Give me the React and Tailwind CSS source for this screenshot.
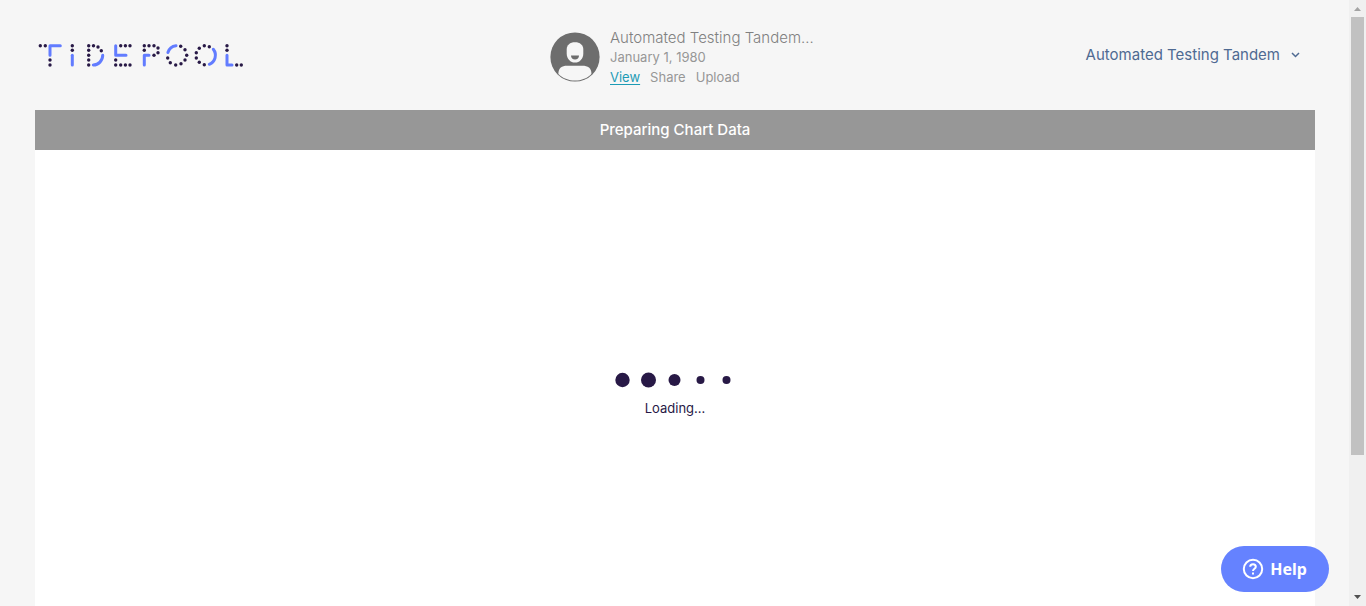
import React from "react";

const logoDots = [
  [40.3, 45.7], [45.3, 45.7], [50, 60], [50, 65],
  [72.3, 45.7], [72.3, 50.3],
  [88.7, 45.7], [88.7, 50.3], [88.7, 55.2], [88.7, 60], [88.7, 65], [93.5, 45.7], [98, 47], [101.3, 50.7],
  [120.7, 45.7], [125.4, 45.7], [130, 45.7], [115.7, 60], [115.7, 65], [120.7, 65], [125.4, 65], [130, 65],
  [144.3, 45.7], [149, 45.7], [154, 45.7], [144.3, 50.3], [158, 48], [158, 52.7], [154, 55.3],
  [180.7, 46.3], [185, 49.7], [186.7, 55.3], [185, 60], [181, 63.7], [175.7, 65], [170.3, 62.7], [167.7, 58],
  [204.3, 45.7], [209.3, 46.7], [199.3, 48.3], [196.3, 52.7], [196.3, 58], [199.3, 62.3], [204.3, 64.7],
  [227, 45.7], [227, 50.3], [236.7, 65], [241.3, 65],
];

function Logo() {
  return (
    <svg width="210" height="30" viewBox="36 40 210 30" role="img" aria-label="Tidepool">
      <g fill="none" stroke="#627cff" strokeWidth="3" strokeLinecap="round" strokeLinejoin="round">
        <path d="M50 55.3V45.7H60.3" />
        <path d="M72.3 55.3V65" />
        <path d="M102.7 55.3A9.6 9.6 0 0 1 93.3 65" />
        <path d="M115.7 45.7V55.3H126" />
        <path d="M144.3 65V55.3H149" />
        <path d="M167.9 52.5A9.7 9.7 0 0 1 176 45.7" />
        <path d="M213.3 49.3A9.7 9.7 0 0 1 209.3 64.3" />
        <path d="M227 55.3V65H232" />
      </g>
      <g fill="#281946">
        {logoDots.map(([x, y]) => (
          <circle key={`${x}-${y}`} cx={x} cy={y} r="1.7" />
        ))}
      </g>
    </svg>
  );
}

function Avatar() {
  return (
    <svg width="50" height="50" viewBox="0 0 50 50" className="shrink-0" aria-hidden="true">
      <circle cx="25" cy="25" r="24.6" fill="#6d6d6d" />
      <path d="M8.4 42C8.2 36 12 33.8 17 33.8H32.5C37.5 33.8 41.8 36 41.4 42C37.5 46.2 31.5 48.6 25 48.6S12.5 46.2 8.4 42Z" fill="#f6f6f6" />
      <path d="M25 10.3C30 10.3 33.3 13 33.3 17.5V21.5C33.3 27 29.5 30.6 25 30.6S16.7 27 16.7 21.5V17.5C16.7 13 20 10.3 25 10.3Z" fill="#f6f6f6" />
      <path d="M21 23.5H29C29 26 27.3 27.5 25 27.5S21 26 21 23.5Z" fill="#6d6d6d" />
    </svg>
  );
}

function Header() {
  return (
    <header className="grid h-[110px] grid-cols-[1fr_270px_1fr]">
      <a href="#home" className="mt-10 justify-self-start pl-px">
        <Logo />
      </a>
      <div className="flex items-start pt-7 pl-[10px]">
        <div className="pt-1">
          <Avatar />
        </div>
        <div className="ml-[10px] whitespace-nowrap text-[13px] leading-5 text-[#979797]">
          <div className="text-[15px] leading-[19px] font-light text-[#808080]">Automated Testing Tandem…</div>
          <div>January 1, 1980</div>
          <nav className="flex gap-[10px]">
            <a href="#view" className="text-[#1d9bb5] underline underline-offset-2">View</a>
            <a href="#share">Share</a>
            <a href="#upload">Upload</a>
          </nav>
        </div>
      </div>
      <button className="mt-[43px] mr-[14px] flex items-center gap-[10px] self-start justify-self-end whitespace-nowrap text-[15px] leading-6 text-[#4f6a92]">
        Automated Testing Tandem
        <svg width="11" height="8" viewBox="0 0 11 8" fill="none" stroke="currentColor" strokeWidth="1.5" aria-hidden="true">
          <path d="M2 2L5.5 5.5L9 2" />
        </svg>
      </button>
    </header>
  );
}

function Loader() {
  return (
    <div role="status" className="mt-[220px] flex flex-col items-center text-[13px] leading-5 text-[#281946]">
      <svg width="130" height="20" viewBox="0 0 130 20" fill="#281946" aria-hidden="true" className="mr-1">
        <circle cx="14.5" cy="10" r="7.2" />
        <circle cx="40.5" cy="10" r="7.5" />
        <circle cx="66.5" cy="10" r="6" />
        <circle cx="92.5" cy="10" r="4" />
        <circle cx="118.5" cy="10" r="4" />
      </svg>
      <p className="mt-2">Loading...</p>
    </div>
  );
}

function ScrollRail() {
  return (
    <div aria-hidden="true" className="flex w-[17px] shrink-0 flex-col items-center bg-[#f0f0f0]">
      <svg width="17" height="17" viewBox="0 0 17 17" fill="#a3a3a3" className="shrink-0">
        <path d="M5 11H12L8.5 7Z" />
      </svg>
      <div className="flex w-full flex-1 flex-col px-0.5">
        <div className="h-[76.5%] bg-[#c1c1c1]" />
      </div>
      <svg width="17" height="17" viewBox="0 0 17 17" fill="#505050" className="shrink-0">
        <path d="M5 6H12L8.5 10Z" />
      </svg>
    </div>
  );
}

export default function App() {
  return (
    <div className="flex h-screen bg-[#f6f6f6] font-['Inter','Liberation_Sans',sans-serif]">
      <div className="flex min-w-0 flex-1 flex-col pr-[34px] pl-[35px]">
        <Header />
        <main className="flex flex-1 flex-col bg-white">
          <h1 className="bg-[#979797] text-center text-[15px] leading-10 font-medium text-white">
            Preparing Chart Data
          </h1>
          <Loader />
        </main>
      </div>
      <ScrollRail />
      <button className="fixed right-[37px] bottom-[14px] flex h-[46px] items-center gap-1.5 rounded-full bg-[#6582ff] pr-[22px] pl-[21px] font-['Noto_Sans',sans-serif] text-base font-bold text-white">
        <svg width="22" height="22" viewBox="0 0 22 22" fill="none" stroke="currentColor" strokeWidth="2" aria-hidden="true">
          <circle cx="11" cy="11" r="9.2" />
          <path d="M8.2 8.8C8.2 7.2 9.4 6.2 11 6.2S13.8 7.2 13.8 8.7C13.8 10.7 11 10.9 11 13.1" />
          <path d="M11 14.4V16.4" />
        </svg>
        Help
      </button>
    </div>
  );
}
